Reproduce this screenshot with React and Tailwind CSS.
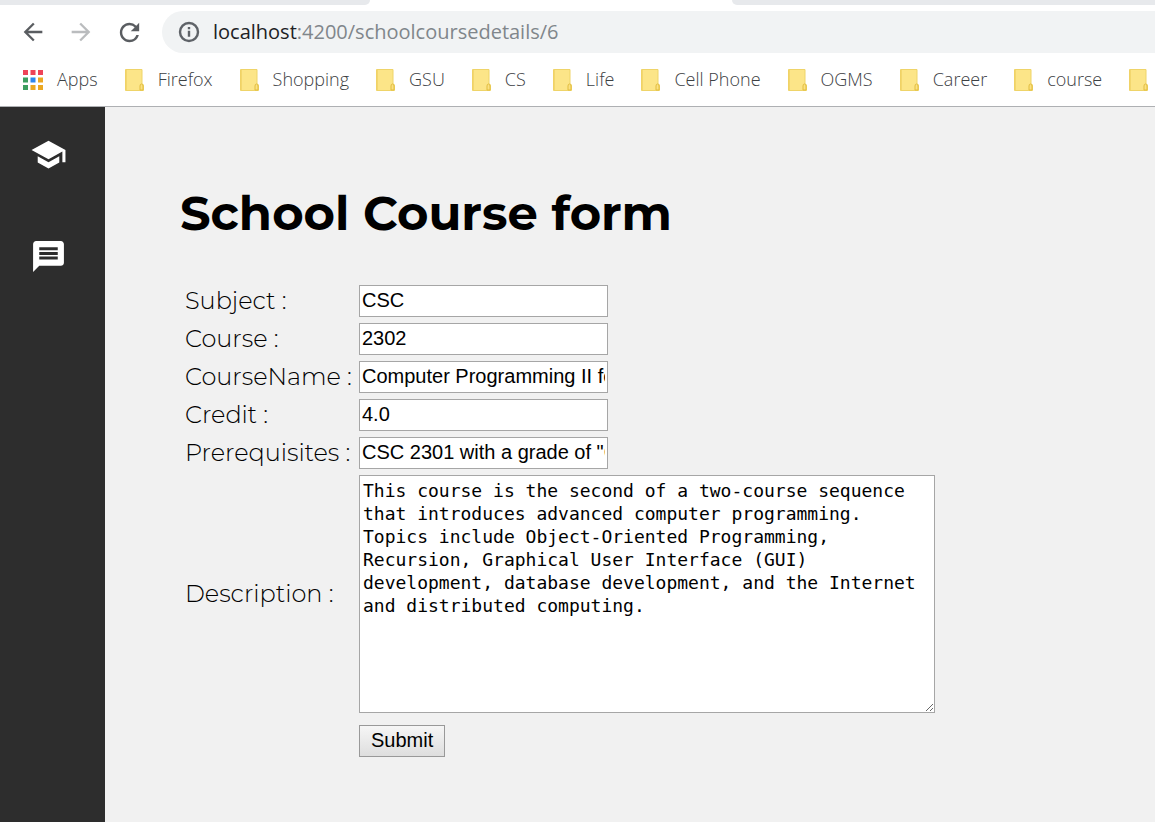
import { MdArrowBack, MdArrowForward, MdRefresh, MdSchool, MdMessage } from "react-icons/md";

const bookmarks = ["Firefox", "Shopping", "GSU", "CS", "Life", "Cell Phone", "OGMS", "Career", "course", ""];

const fields = [
  { id: "subject", label: "Subject :", value: "CSC" },
  { id: "course", label: "Course :", value: "2302" },
  { id: "courseName", label: "CourseName :", value: "Computer Programming II for Majors" },
  { id: "credit", label: "Credit :", value: "4.0" },
  { id: "prerequisites", label: "Prerequisites :", value: 'CSC 2301 with a grade of "C" or higher' },
];

const description =
  "This course is the second of a two-course sequence that introduces advanced computer programming. Topics include Object-Oriented Programming, Recursion, Graphical User Interface (GUI) development, database development, and the Internet and distributed computing.";

function FolderIcon() {
  return (
    <svg width="19" height="22" viewBox="0 0 19 22" className="shrink-0" aria-hidden="true">
      <path d="M.5.5h16.5v14.5h.5q1 .5 1 2v4.5H.5z" fill="#fce588" stroke="#efd469" />
      <path d="M1 1v20" stroke="#f0d266" strokeWidth="1.5" />
      <path d="M15 21v-4q0-2 1.5-2t1.5 2v4z" fill="#fbe183" stroke="#e2bd3f" />
    </svg>
  );
}

function InfoIcon() {
  return (
    <svg width="24" height="24" viewBox="0 0 24 24" className="shrink-0" aria-hidden="true">
      <circle cx="12" cy="12" r="9" fill="none" stroke="#5f6368" strokeWidth="2.4" />
      <path d="M10.8 10.8h2.4v6h-2.4zM10.8 7h2.4v2.3h-2.4z" fill="#5f6368" />
    </svg>
  );
}

function AppsIcon() {
  const colors = ["#ee4358", "#ee4358", "#ee4358", "#3c9e5f", "#2f86ec", "#eba822", "#3c9e5f", "#eba822", "#eba822"];
  return (
    <svg width="20" height="20" viewBox="0 0 20 20" className="shrink-0" aria-hidden="true">
      {colors.map((c, i) => (
        <rect key={i} x={(i % 3) * 7.5} y={Math.floor(i / 3) * 7.5} width="5" height="5" fill={c} />
      ))}
    </svg>
  );
}

function BrowserBar() {
  return (
    <header className="overflow-hidden border-b border-[#aeb0b3] bg-white font-['Segoe_UI','Open_Sans',sans-serif]">
      <div className="flex h-[5px]">
        <div className="w-[32%] rounded-br-lg bg-[#e7e9ec]" />
        <div className="w-[362px]" />
        <div className="flex-1 rounded-bl-lg bg-[#e7e9ec]" />
      </div>
      <div className="mt-1.5 flex h-[42px] items-center pl-[19px]">
        <button type="button" aria-label="Back" className="text-[#5a5d61]">
          <MdArrowBack size={28} />
        </button>
        <button type="button" aria-label="Forward" className="ml-5 text-[#babcbe]">
          <MdArrowForward size={28} />
        </button>
        <button type="button" aria-label="Reload" className="ml-5 text-[#5a5d61]">
          <MdRefresh size={29} />
        </button>
        <div className="ml-[18px] flex h-[42px] flex-1 items-center gap-3 rounded-l-full bg-[#f1f3f4] pl-[15px] text-[20px]">
          <InfoIcon />
          <span className="whitespace-nowrap text-[#80868b]">
            <span className="text-[#202124]">localhost</span>:4200/schoolcoursedetails/6
          </span>
        </div>
      </div>
      <nav aria-label="Bookmarks" className="flex h-[53px] items-center gap-[27px] pl-[23px] text-[18px] font-light text-[#3c4043]">
        <a href="#apps" className="flex shrink-0 items-center gap-3.5">
          <AppsIcon />
          Apps
        </a>
        {bookmarks.map((name) => (
          <a key={name} href="#folder" className="flex shrink-0 items-center gap-3.5">
            <FolderIcon />
            {name}
          </a>
        ))}
      </nav>
    </header>
  );
}

export default function App() {
  return (
    <div className="flex min-h-screen flex-col bg-[#f1f1f1] text-black">
      <BrowserBar />
      <div className="flex flex-1">
        <nav aria-label="Main" className="flex w-[105px] shrink-0 flex-col items-start gap-[65px] bg-[#2d2d2d] pt-[29px] pl-[30px] text-white">
          <a href="#school" aria-label="School">
            <MdSchool size={37} />
          </a>
          <a href="#messages" aria-label="Messages">
            <MdMessage size={37} />
          </a>
        </nav>
        <main className="flex-1 pt-[76px] pr-8 pb-16 pl-[75px] font-['Montserrat','Inter',sans-serif]">
          <h1 className="text-[48px] leading-[60px] font-bold">School Course form</h1>
          <form
            className="mt-[42px] grid grid-cols-[168px_1fr] items-center gap-x-1.5 gap-y-1.5 pl-[5px]"
            onSubmit={(e) => e.preventDefault()}
          >
            {fields.map((f) => (
              <div key={f.id} className="contents">
                <label htmlFor={f.id} className="text-[24px] leading-8 font-light whitespace-nowrap">
                  {f.label}
                </label>
                <input
                  id={f.id}
                  type="text"
                  defaultValue={f.value}
                  className="h-8 w-[249px] border border-[#a6a6a6] bg-white px-0.5 pb-0.5 font-['Liberation_Sans',sans-serif] text-[20px]"
                />
              </div>
            ))}
            <label htmlFor="description" className="text-[24px] leading-8 font-light whitespace-nowrap">
              Description :
            </label>
            <textarea
              id="description"
              defaultValue={description}
              className="h-[238px] w-[576px] border border-[#a6a6a6] bg-white px-[3px] py-[3px] font-['Consolas','DejaVu_Sans_Mono',monospace] text-[18px] leading-[23px]"
            />
            <button
              type="submit"
              className="col-start-2 mt-1.5 h-8 justify-self-start border border-[#999] bg-linear-to-b from-[#f6f6f6] to-[#dedede] px-[11px] pb-0.5 font-['Liberation_Sans',sans-serif] text-[20px] leading-7"
            >
              Submit
            </button>
          </form>
        </main>
      </div>
    </div>
  );
}
